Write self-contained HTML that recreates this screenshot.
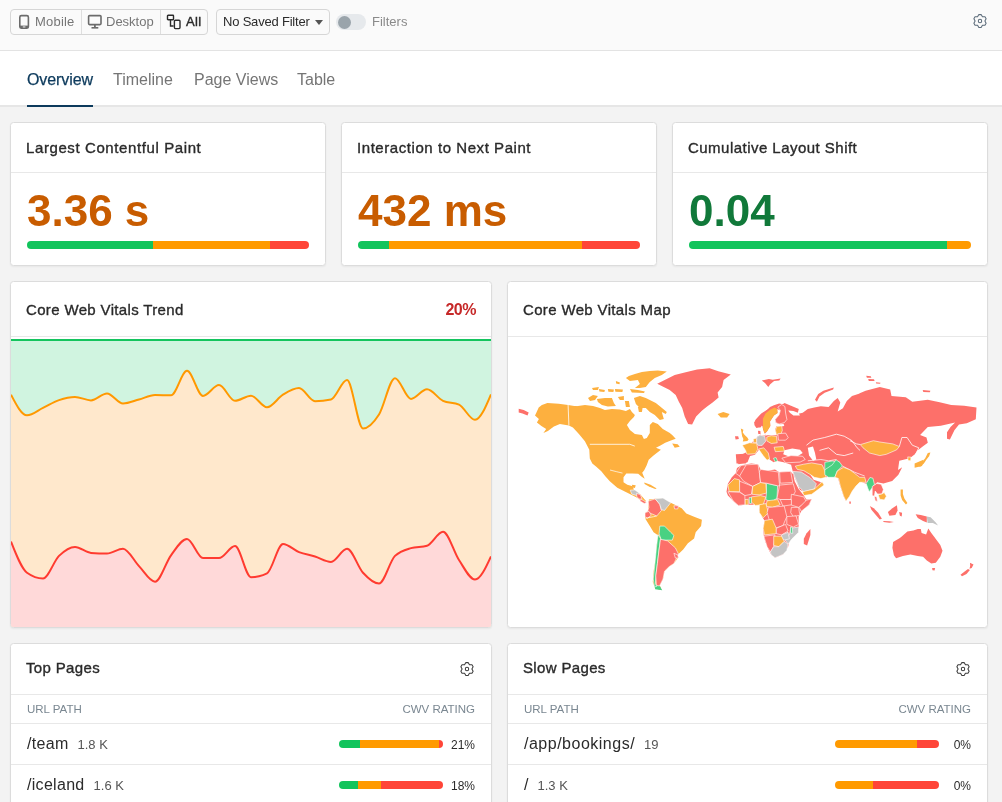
<!DOCTYPE html>
<html><head><meta charset="utf-8">
<style>
*{box-sizing:border-box;margin:0;padding:0}
html,body{width:1002px;height:802px;overflow:hidden}
body{will-change:transform}
body{background:#f3f3f3;font-family:"Liberation Sans",sans-serif;position:relative;color:#2b2b2b}
.abs{position:absolute}
#top{left:0;top:0;width:1002px;height:51px;background:#fafafa;border-bottom:1px solid #e3e3e3}
#tabs{left:0;top:51px;width:1002px;height:56px;background:#fff;border-bottom:2px solid #e6e6e6}
.tab{position:absolute;top:18.5px;font-size:16px;color:#757575;white-space:nowrap;line-height:20px}
.card{position:absolute;background:#fff;border:1px solid #dcdcdc;border-radius:3.5px;box-shadow:0 1px 2px rgba(0,0,0,0.05);overflow:hidden}
.ch{position:absolute;left:0;top:0;right:0;border-bottom:1px solid #e8e8e8}
.ct{position:absolute;left:15px;font-size:15px;color:#2a2a2a;-webkit-text-stroke:0.35px #2a2a2a;letter-spacing:0.35px;white-space:nowrap}
.big{position:absolute;left:16px;top:63px;font-size:44px;font-weight:bold;line-height:50px;white-space:nowrap}
.bar{position:absolute;height:8px;border-radius:4px;overflow:hidden;display:flex}
.g{background:#12c45c}.o{background:#ff9a00}.r{background:#ff4538}
.txt{position:absolute;white-space:nowrap}
.th{position:absolute;top:58.5px;font-size:11.5px;letter-spacing:0px;color:#7a8791;white-space:nowrap}
.url{position:absolute;left:16px;font-size:16px;color:#2b2b2b;white-space:nowrap;line-height:20px}
.cnt{font-size:13px;color:#555;margin-left:9px;letter-spacing:0}
.pct{position:absolute;right:16px;font-size:12px;color:#2b2b2b;white-space:nowrap;line-height:16px}
</style></head><body>

<div id="top" class="abs">
  <!-- button group -->
  <div class="abs" style="left:10px;top:9px;width:198px;height:26px;border:1px solid #d6d6d6;border-radius:4px;background:#fafafa"></div>
  <div class="abs" style="left:81px;top:10px;width:1px;height:24px;background:#dedede"></div>
  <div class="abs" style="left:160px;top:10px;width:1px;height:24px;background:#dedede"></div>
  <svg class="abs" style="left:18px;top:14px" width="12" height="16" viewBox="0 0 12 16"><rect x="1.8" y="1.6" width="8.6" height="12.6" rx="1.6" fill="none" stroke="#6b6b6b" stroke-width="1.6"/><rect x="1.8" y="11.6" width="8.6" height="2.6" fill="#6b6b6b"/><rect x="4.8" y="12.5" width="2.6" height="0.9" fill="#fff"/></svg>
  <div class="txt" style="left:35px;top:14px;font-size:13px;color:#767676;letter-spacing:0.2px">Mobile</div>
  <svg class="abs" style="left:87px;top:14px" width="16" height="16" viewBox="0 0 16 16"><rect x="1.6" y="1.6" width="12.4" height="9" rx="1" fill="none" stroke="#6b6b6b" stroke-width="1.6"/><rect x="7" y="10.5" width="1.8" height="3" fill="#6b6b6b"/><rect x="4.5" y="13" width="6.8" height="1.6" fill="#6b6b6b"/></svg>
  <div class="txt" style="left:106px;top:14px;font-size:13px;color:#767676">Desktop</div>
  <svg class="abs" style="left:166px;top:14px" width="16" height="16" viewBox="0 0 16 16"><rect x="1.5" y="1.2" width="6" height="4.6" rx="0.6" fill="none" stroke="#2b2b2b" stroke-width="1.4"/><rect x="8.4" y="6.2" width="5.6" height="8.4" rx="1" fill="none" stroke="#2b2b2b" stroke-width="1.4"/><path d="M4.5 6 V12 H7.6" fill="none" stroke="#2b2b2b" stroke-width="1.4"/></svg>
  <div class="txt" style="left:186px;top:14px;font-size:13px;color:#2b2b2b;-webkit-text-stroke:0.4px #2b2b2b;letter-spacing:0.3px">All</div>
  <!-- dropdown -->
  <div class="abs" style="left:216px;top:9px;width:114px;height:26px;border:1px solid #d6d6d6;border-radius:4px;background:#fafafa"></div>
  <div class="txt" style="left:223px;top:14px;font-size:13px;color:#2b2b2b;letter-spacing:-0.2px">No Saved Filter</div>
  <svg class="abs" style="left:314px;top:19px" width="10" height="7" viewBox="0 0 10 7"><path d="M1 1 L9 1 L5 6 Z" fill="#555"/></svg>
  <!-- toggle -->
  <div class="abs" style="left:336px;top:14px;width:30px;height:16px;border-radius:8px;background:#e6e9ec"></div>
  <div class="abs" style="left:338px;top:16px;width:13px;height:13px;border-radius:50%;background:#9aa4ab"></div>
  <div class="txt" style="left:372px;top:14px;font-size:13px;color:#8a8a8a">Filters</div>
  <!-- gear -->
  <svg class="abs" style="left:973px;top:14px" width="14" height="14" viewBox="0 0 14 14"><path d="M9.45 2.76 L8.13 0.60 L5.87 0.60 L4.55 2.76 L2.02 2.82 L0.89 4.78 L2.10 7.00 L0.89 9.22 L2.02 11.18 L4.55 11.24 L5.87 13.40 L8.13 13.40 L9.45 11.24 L11.98 11.18 L13.11 9.22 L11.90 7.00 L13.11 4.78 L11.98 2.82 Z" fill="none" stroke="#5b6b7a" stroke-width="1.05" stroke-linejoin="round"/><circle cx="7" cy="7" r="1.7" fill="none" stroke="#5b6b7a" stroke-width="1.05"/></svg>
</div>

<div id="tabs" class="abs">
  <div class="tab" style="left:27px;color:#0c3a5c;-webkit-text-stroke:0.25px #0c3a5c;letter-spacing:-0.1px">Overview</div>
  <div class="tab" style="left:113px">Timeline</div>
  <div class="tab" style="left:194px">Page Views</div>
  <div class="tab" style="left:297px">Table</div>
  <div class="abs" style="left:27px;top:54px;width:66px;height:2px;background:#0c3a5c"></div>
</div>

<!-- metric cards -->
<div class="card" style="left:10px;top:122px;width:316px;height:144px">
  <div class="ch" style="height:50px"></div>
  <div class="ct" style="top:16px;letter-spacing:0.6px">Largest Contentful Paint</div>
  <div class="big" style="color:#c85c00">3.36 s</div>
  <div class="bar" style="left:16px;top:118px;width:282px"><div class="g" style="width:126px"></div><div class="o" style="width:117px"></div><div class="r" style="flex:1"></div></div>
</div>
<div class="card" style="left:341px;top:122px;width:316px;height:144px">
  <div class="ch" style="height:50px"></div>
  <div class="ct" style="top:16px;letter-spacing:0.56px">Interaction to Next Paint</div>
  <div class="big" style="color:#c85c00">432 ms</div>
  <div class="bar" style="left:16px;top:118px;width:282px"><div class="g" style="width:31px"></div><div class="o" style="width:193px"></div><div class="r" style="flex:1"></div></div>
</div>
<div class="card" style="left:672px;top:122px;width:316px;height:144px">
  <div class="ch" style="height:50px"></div>
  <div class="ct" style="top:16px;letter-spacing:0.47px">Cumulative Layout Shift</div>
  <div class="big" style="color:#11793a">0.04</div>
  <div class="bar" style="left:16px;top:118px;width:282px"><div class="g" style="width:258px"></div><div class="o" style="flex:1"></div></div>
</div>

<!-- trend card -->
<div class="card" style="left:10px;top:281px;width:482px;height:347px">
  <div class="ch" style="height:55px"></div>
  <div class="ct" style="top:19px">Core Web Vitals Trend</div>
  <div class="txt" style="right:15px;top:18.5px;font-size:16px;letter-spacing:-0.5px;font-weight:bold;color:#c62828">20%</div>
  <svg id="trend" class="abs" style="left:0;top:55px" width="480" height="290"><rect x="0" y="3" width="480" height="290" fill="#d0f4e0"/><path d="M0.00 57.70 C5.33 68.00 10.67 78.30 16.00 78.30 C21.33 78.30 26.67 73.43 32.00 70.90 C37.33 68.37 42.67 64.93 48.00 63.10 C53.33 61.27 58.67 59.90 64.00 59.90 C69.33 59.90 74.67 63.40 80.00 63.40 C85.33 63.40 90.67 56.50 96.00 56.50 C101.33 56.50 106.67 66.50 112.00 66.50 C117.33 66.50 122.67 63.92 128.00 62.50 C133.33 61.08 138.67 58.00 144.00 58.00 C149.33 58.00 154.67 58.30 160.00 58.30 C165.33 58.30 170.67 33.80 176.00 33.80 C181.33 33.80 186.67 58.90 192.00 58.90 C197.33 58.90 202.67 48.10 208.00 48.10 C213.33 48.10 218.67 63.80 224.00 63.80 C229.33 63.80 234.67 58.70 240.00 58.70 C245.33 58.70 250.67 70.30 256.00 70.30 C261.33 70.30 266.67 60.90 272.00 57.70 C277.33 54.50 282.67 51.10 288.00 51.10 C293.33 51.10 298.67 64.30 304.00 64.30 C309.33 64.30 314.67 63.70 320.00 62.50 C325.33 61.30 330.67 43.10 336.00 43.10 C341.33 43.10 346.67 91.50 352.00 91.50 C357.33 91.50 362.67 85.88 368.00 77.50 C373.33 69.12 378.67 41.20 384.00 41.20 C389.33 41.20 394.67 61.90 400.00 61.90 C405.33 61.90 410.67 52.30 416.00 52.30 C421.33 52.30 426.67 61.27 432.00 63.80 C437.33 66.33 442.67 65.07 448.00 67.60 C453.33 70.13 458.67 82.80 464.00 82.80 C469.33 82.80 474.67 70.10 480.00 57.40 L480 290 L0 290 Z" fill="#ffe8cc"/><path d="M0.00 204.60 C5.33 218.25 10.67 231.90 16.00 235.70 C21.33 239.50 26.67 241.40 32.00 241.40 C37.33 241.40 42.67 224.15 48.00 218.90 C53.33 213.65 58.67 209.90 64.00 209.90 C69.33 209.90 74.67 215.50 80.00 215.90 C85.33 216.30 90.67 216.50 96.00 216.50 C101.33 216.50 106.67 211.70 112.00 211.70 C117.33 211.70 122.67 223.60 128.00 229.10 C133.33 234.60 138.67 244.70 144.00 244.70 C149.33 244.70 154.67 225.43 160.00 218.30 C165.33 211.17 170.67 201.90 176.00 201.90 C181.33 201.90 186.67 221.10 192.00 221.10 C197.33 221.10 202.67 221.10 208.00 221.10 C213.33 221.10 218.67 209.10 224.00 209.10 C229.33 209.10 234.67 240.20 240.00 240.20 C245.33 240.20 250.67 238.90 256.00 236.30 C261.33 233.70 266.67 207.00 272.00 207.00 C277.33 207.00 282.67 213.02 288.00 215.10 C293.33 217.18 298.67 217.87 304.00 219.50 C309.33 221.13 314.67 224.90 320.00 224.90 C325.33 224.90 330.67 211.70 336.00 211.70 C341.33 211.70 346.67 229.90 352.00 235.70 C357.33 241.50 362.67 246.50 368.00 246.50 C373.33 246.50 378.67 224.10 384.00 218.90 C389.33 213.70 394.67 212.70 400.00 211.10 C405.33 209.50 410.67 210.30 416.00 208.70 C421.33 207.10 426.67 194.70 432.00 194.70 C437.33 194.70 442.67 215.02 448.00 223.00 C453.33 230.98 458.67 242.60 464.00 242.60 C469.33 242.60 474.67 231.00 480.00 219.40 L480 290 L0 290 Z" fill="#ffd9d9"/><line x1="0" y1="3" x2="480" y2="3" stroke="#14c45e" stroke-width="2"/><path d="M0.00 57.70 C5.33 68.00 10.67 78.30 16.00 78.30 C21.33 78.30 26.67 73.43 32.00 70.90 C37.33 68.37 42.67 64.93 48.00 63.10 C53.33 61.27 58.67 59.90 64.00 59.90 C69.33 59.90 74.67 63.40 80.00 63.40 C85.33 63.40 90.67 56.50 96.00 56.50 C101.33 56.50 106.67 66.50 112.00 66.50 C117.33 66.50 122.67 63.92 128.00 62.50 C133.33 61.08 138.67 58.00 144.00 58.00 C149.33 58.00 154.67 58.30 160.00 58.30 C165.33 58.30 170.67 33.80 176.00 33.80 C181.33 33.80 186.67 58.90 192.00 58.90 C197.33 58.90 202.67 48.10 208.00 48.10 C213.33 48.10 218.67 63.80 224.00 63.80 C229.33 63.80 234.67 58.70 240.00 58.70 C245.33 58.70 250.67 70.30 256.00 70.30 C261.33 70.30 266.67 60.90 272.00 57.70 C277.33 54.50 282.67 51.10 288.00 51.10 C293.33 51.10 298.67 64.30 304.00 64.30 C309.33 64.30 314.67 63.70 320.00 62.50 C325.33 61.30 330.67 43.10 336.00 43.10 C341.33 43.10 346.67 91.50 352.00 91.50 C357.33 91.50 362.67 85.88 368.00 77.50 C373.33 69.12 378.67 41.20 384.00 41.20 C389.33 41.20 394.67 61.90 400.00 61.90 C405.33 61.90 410.67 52.30 416.00 52.30 C421.33 52.30 426.67 61.27 432.00 63.80 C437.33 66.33 442.67 65.07 448.00 67.60 C453.33 70.13 458.67 82.80 464.00 82.80 C469.33 82.80 474.67 70.10 480.00 57.40" fill="none" stroke="#ff9800" stroke-width="2"/><path d="M0.00 204.60 C5.33 218.25 10.67 231.90 16.00 235.70 C21.33 239.50 26.67 241.40 32.00 241.40 C37.33 241.40 42.67 224.15 48.00 218.90 C53.33 213.65 58.67 209.90 64.00 209.90 C69.33 209.90 74.67 215.50 80.00 215.90 C85.33 216.30 90.67 216.50 96.00 216.50 C101.33 216.50 106.67 211.70 112.00 211.70 C117.33 211.70 122.67 223.60 128.00 229.10 C133.33 234.60 138.67 244.70 144.00 244.70 C149.33 244.70 154.67 225.43 160.00 218.30 C165.33 211.17 170.67 201.90 176.00 201.90 C181.33 201.90 186.67 221.10 192.00 221.10 C197.33 221.10 202.67 221.10 208.00 221.10 C213.33 221.10 218.67 209.10 224.00 209.10 C229.33 209.10 234.67 240.20 240.00 240.20 C245.33 240.20 250.67 238.90 256.00 236.30 C261.33 233.70 266.67 207.00 272.00 207.00 C277.33 207.00 282.67 213.02 288.00 215.10 C293.33 217.18 298.67 217.87 304.00 219.50 C309.33 221.13 314.67 224.90 320.00 224.90 C325.33 224.90 330.67 211.70 336.00 211.70 C341.33 211.70 346.67 229.90 352.00 235.70 C357.33 241.50 362.67 246.50 368.00 246.50 C373.33 246.50 378.67 224.10 384.00 218.90 C389.33 213.70 394.67 212.70 400.00 211.10 C405.33 209.50 410.67 210.30 416.00 208.70 C421.33 207.10 426.67 194.70 432.00 194.70 C437.33 194.70 442.67 215.02 448.00 223.00 C453.33 230.98 458.67 242.60 464.00 242.60 C469.33 242.60 474.67 231.00 480.00 219.40" fill="none" stroke="#ff3b30" stroke-width="2"/></svg>
</div>

<!-- map card -->
<div class="card" style="left:507px;top:281px;width:481px;height:347px">
  <div class="ch" style="height:55px"></div>
  <div class="ct" style="top:19px">Core Web Vitals Map</div>
  <svg id="map" class="abs" style="left:-508px;top:-282px" width="1002" height="802"><polygon points="536.2,412.9 538.7,407.4 541.9,404.9 547.4,402.9 558.7,403.7 568.1,404.9 577.4,406.4 570.0,406.9 578.0,405.9 585.0,404.9 593.0,405.9 599.9,407.9 604.9,409.9 611.9,408.9 619.9,409.4 625.9,410.9 629.9,408.9 631.9,411.9 634.9,414.9 633.9,416.9 629.9,420.9 626.9,424.9 629.9,429.9 634.9,433.9 641.9,434.9 643.9,438.9 646.8,437.9 649.8,432.9 649.8,424.9 652.8,421.9 657.8,423.9 662.8,428.9 669.8,432.9 666.7,430.4 672.2,434.9 675.7,438.8 670.9,440.6 665.2,442.8 660.9,445.3 656.0,447.8 660.9,449.8 653.5,455.6 648.7,459.8 646.7,465.3 644.2,470.3 642.2,472.8 644.7,478.8 641.7,476.8 638.2,473.8 632.3,473.5 626.3,473.5 623.5,477.3 623.5,482.3 627.3,484.8 632.8,486.2 633.8,489.7 639.7,493.7 646.2,501.2 643.2,502.7 637.2,497.7 629.8,494.0 624.8,491.5 617.3,487.7 609.8,481.3 605.3,476.3 601.3,471.3 596.3,466.8 592.3,463.5 589.8,458.6 589.3,449.8 584.9,441.3 578.9,433.9 572.9,427.4 568.9,425.4 559.9,423.9 553.9,426.4 547.9,430.9 543.4,433.1 546.2,428.9 541.4,426.1 536.9,422.4 538.9,418.9 535.0,415.4" fill="#fdb03f"/><polygon points="634.9,374.0 641.9,372.0 649.8,371.0 657.8,370.5 666.8,371.5 661.8,375.0 654.8,378.0 649.8,382.0 645.8,387.0 639.9,388.0 634.9,388.0 639.9,384.0 637.9,380.0 629.9,381.0 625.9,378.0 628.9,376.0" fill="#fdb03f"/><polygon points="633.9,397.9 639.9,395.9 645.8,397.9 649.8,399.9 655.8,402.9 660.8,406.9 666.8,411.9 665.8,413.9 661.8,411.9 663.8,418.9 659.8,419.9 654.8,414.9 649.8,411.9 645.8,407.9 639.9,407.9 635.9,403.9" fill="#fdb03f"/><polygon points="637.9,406.9 642.9,405.9 641.9,411.9 638.9,411.9" fill="#fdb03f"/><polygon points="629.9,389.0 637.9,390.0 644.9,391.4 643.9,392.9 631.9,392.4" fill="#fdb03f"/><polygon points="596.9,398.9 604.9,397.9 611.9,397.9 613.9,402.9 615.9,405.9 607.9,406.4 601.9,404.9 597.9,401.9" fill="#fdb03f"/><polygon points="588.0,397.9 593.0,394.9 597.9,395.9 595.0,399.9 590.0,400.9" fill="#fdb03f"/><polygon points="617.9,396.9 623.9,395.9 623.9,399.9 619.9,399.9" fill="#fdb03f"/><polygon points="624.9,400.9 628.9,400.9 629.9,406.9 625.9,406.9" fill="#fdb03f"/><polygon points="592.0,388.0 598.9,387.0 597.9,390.0 593.0,390.0" fill="#fdb03f"/><polygon points="598.9,389.0 604.9,390.0 604.4,391.9 599.4,391.4" fill="#fdb03f"/><polygon points="607.9,389.0 613.9,389.5 613.4,391.9 608.4,391.7" fill="#fdb03f"/><polygon points="614.9,389.0 622.9,389.5 622.4,391.9 615.4,391.7" fill="#fdb03f"/><polygon points="615.9,381.0 619.9,382.5 619.4,384.2 616.1,383.5" fill="#fdb03f"/><polygon points="672.2,443.6 677.7,444.3 679.7,446.8 674.7,447.8" fill="#fdb03f"/><polygon points="717.6,413.9 723.3,411.9 729.6,413.9 727.1,417.4 720.8,417.4" fill="#fdb03f"/><polygon points="518.7,408.7 523.7,409.9 528.7,412.4 527.5,415.4 522.5,413.6 518.7,412.4" fill="#fd706a"/><polygon points="657.2,383.7 664.7,380.0 674.7,375.0 684.7,372.5 697.1,369.5 709.6,368.2 718.3,371.2 730.8,374.5 723.6,380.0 722.1,386.9 717.6,392.4 718.6,397.4 712.6,402.4 707.1,406.4 702.1,410.4 696.1,416.4 692.1,424.4 688.1,423.9 684.7,416.4 682.2,407.9 678.7,401.4 675.7,394.9 669.7,389.9 662.2,386.2" fill="#fd706a"/><polyline points="568.1,404.9 568.9,425.4" fill="none" stroke="#fff" stroke-width="0.80" stroke-linejoin="round"/><polyline points="589.8,444.3 629.8,444.3 634.8,446.1" fill="none" stroke="#fff" stroke-width="0.80" stroke-linejoin="round"/><polyline points="610.0,470.0 616.2,471.6 622.5,473.1" fill="none" stroke="#fff" stroke-width="0.70" stroke-linejoin="round"/><polygon points="630.2,490.2 634.9,489.9 639.6,493.4 637.3,495.7 631.8,494.1" fill="#c4c4c4" stroke="#fff" stroke-width="0.6" stroke-linejoin="round"/><polygon points="636.5,493.4 640.4,494.6 641.9,498.8 639.6,499.6 636.8,496.5" fill="#fd706a" stroke="#fff" stroke-width="0.6" stroke-linejoin="round"/><polygon points="639.6,498.8 643.5,500.4 646.6,502.7 644.3,503.5 640.4,501.2" fill="#fd706a" stroke="#fff" stroke-width="0.6" stroke-linejoin="round"/><polygon points="644.3,482.5 650.5,484.8 656.7,488.4 655.2,489.0 648.9,486.4 644.6,484.0" fill="#fdb03f"/><polygon points="631.8,484.8 635.7,485.3 634.9,487.9 632.6,487.4" fill="#fdb03f"/><polygon points="648.9,499.6 655.2,498.8 661.4,498.8 670.7,502.7 675.4,505.0 681.7,508.2 686.3,513.6 694.1,516.7 701.9,519.8 701.1,526.1 695.7,532.3 694.1,538.5 687.9,543.2 683.2,549.4 678.5,554.1 675.4,552.6 678.5,557.2 673.9,563.5 669.2,566.6 664.5,571.2 663.0,579.0 659.8,585.3 661.4,589.9 655.2,588.4 652.8,582.1 653.6,571.2 656.0,557.2 656.7,544.8 658.3,535.4 653.6,532.3 648.9,524.5 645.0,518.3 645.0,513.6 648.2,510.5" fill="#fdb03f"/><polygon points="648.2,501.2 655.2,498.8 659.8,504.3 661.4,510.5 656.7,516.0 651.3,513.6 647.4,512.1 648.9,507.4" fill="#fd706a" stroke="#fff" stroke-width="0.6" stroke-linejoin="round"/><polygon points="645.0,512.8 648.9,511.3 651.3,515.2 647.4,518.3 645.0,516.7" fill="#fd706a" stroke="#fff" stroke-width="0.6" stroke-linejoin="round"/><polygon points="655.2,498.8 663.0,498.0 670.7,502.7 667.6,506.6 664.5,510.5 661.4,509.7 659.8,504.3" fill="#c4c4c4" stroke="#fff" stroke-width="0.6" stroke-linejoin="round"/><polygon points="673.9,505.8 678.5,505.8 677.8,508.9 674.6,508.9" fill="#fd706a" stroke="#fff" stroke-width="0.6" stroke-linejoin="round"/><polygon points="659.8,526.1 664.5,526.1 670.7,532.3 673.9,535.4 672.3,540.1 661.4,540.1 659.1,533.9" fill="#4ad182" stroke="#fff" stroke-width="0.6" stroke-linejoin="round"/><polygon points="654.4,584.5 659.8,586.0 662.2,590.2 655.2,589.2" fill="#4ad182"/><polygon points="658.0,534.6 660.5,538.5 658.9,551.0 657.4,563.5 655.8,575.9 655.5,583.7 656.7,586.5 654.4,586.8 653.3,579.0 654.9,563.5 656.4,547.9" fill="#4ad182" stroke="#fff" stroke-width="0.6" stroke-linejoin="round"/><polygon points="660.5,539.3 667.6,540.9 675.4,547.9 678.5,554.1 673.9,563.5 669.2,566.6 664.5,571.2 663.0,579.0 659.5,586.0 656.4,585.3 655.8,575.9 657.4,563.5 658.9,551.0" fill="#fd706a" stroke="#fff" stroke-width="0.6" stroke-linejoin="round"/><polygon points="673.9,553.3 677.8,554.9 678.5,558.0 675.4,558.0" fill="#fd706a" stroke="#fff" stroke-width="0.6" stroke-linejoin="round"/><polyline points="645.0,518.3 653.6,516.7 656.7,516.0" fill="none" stroke="#fff" stroke-width="0.70" stroke-linejoin="round"/><polygon points="737.5,462.3 737.0,456.1 742.5,454.3 748.7,451.1 745.0,446.1 751.2,443.6 755.0,439.3 759.9,434.9 763.7,432.4 762.4,426.1 756.2,423.6 755.0,419.9 761.2,413.6 768.7,408.7 777.4,404.9 783.6,403.7 784.5,403.1 791.0,405.7 798.8,408.9 797.5,414.1 802.7,412.8 807.8,408.9 814.3,407.6 820.8,406.3 828.6,407.0 833.8,401.1 837.7,397.9 840.3,402.4 837.7,411.5 842.9,408.3 846.8,401.1 852.0,395.9 859.7,393.4 859.1,393.4 865.6,390.8 879.8,386.9 890.2,389.5 891.5,395.9 905.8,397.2 912.3,401.8 927.8,399.8 940.8,402.4 951.2,405.0 964.2,405.7 976.5,407.6 975.8,419.3 966.8,423.2 959.0,424.5 954.4,430.3 949.9,439.4 947.0,438.8 947.0,432.3 950.5,427.1 955.1,422.5 940.8,425.8 927.8,427.1 920.1,434.9 926.5,437.5 927.8,442.7 922.7,446.5 917.5,450.4 914.9,454.3 909.7,458.2 904.5,459.5 899.3,460.8 898.0,470.0 902.2,467.3 898.4,474.8 892.2,481.0 883.4,483.5 877.2,482.3 873.5,486.0 868.5,484.8 862.2,482.3 859.7,479.8 856.0,484.8 848.5,496.0 846.0,501.0 843.5,496.0 839.8,484.8 837.8,477.3 832.3,476.0 826.1,477.3 819.8,472.3 814.8,468.5 809.8,464.8 804.9,466.0 813.6,479.8 821.1,482.3 817.3,487.2 804.9,492.2 799.9,489.7 793.6,474.8 791.1,464.8 787.4,463.5 783.6,462.3 777.4,461.0 773.7,462.3 769.9,459.8 764.9,453.6 759.9,448.6 755.0,454.8 750.0,456.1 747.5,462.3 738.7,464.3" fill="#fd706a"/><polygon points="761.8,380.4 768.9,379.1 772.8,379.7 780.6,378.4 779.3,380.4 774.1,381.0 770.2,384.3 768.3,386.9 765.0,383.0" fill="#fd706a"/><polygon points="815.0,399.8 818.2,394.0 823.4,390.8 833.8,387.5 833.1,389.5 824.7,392.7 819.5,396.6 816.9,401.8" fill="#fd706a"/><polygon points="866.2,375.8 870.8,376.2 871.4,377.8 866.9,377.8" fill="#fd706a"/><polygon points="868.2,379.1 874.0,379.3 874.6,381.0 868.8,381.0" fill="#fd706a"/><polygon points="875.9,382.3 880.5,382.7 880.1,383.8 876.2,383.6" fill="#fd706a"/><polygon points="922.7,390.1 930.4,390.8 929.8,392.3 923.3,392.1" fill="#fd706a"/><polygon points="784.5,450.2 792.3,448.5 800.1,449.8 802.7,453.0 797.5,456.3 788.4,456.3 783.2,454.3" fill="#ffffff"/><polygon points="807.8,447.8 813.0,446.5 815.0,453.0 816.3,459.5 813.0,460.8 809.1,455.6" fill="#ffffff"/><polygon points="744.7,419.5 754.5,422.0 756.4,427.9 760.9,427.9 762.9,430.5 757.7,430.5 757.0,435.0 754.5,436.3 751.2,438.9 748.6,438.9 744.7,435.0" fill="#ffffff"/><polygon points="777.2,409.1 780.4,410.4 779.1,414.9 775.2,419.5 775.9,422.7 779.7,424.3 783.6,424.0 784.3,425.9 780.4,426.6 776.5,425.9 775.2,429.2 776.5,435.0 771.3,435.3 766.1,435.3 764.8,433.7 766.8,431.8 770.3,425.9 770.0,421.4 773.9,415.6 777.5,413.0" fill="#ffffff"/><polygon points="788.2,410.4 793.4,411.0 798.6,413.0 800.0,415.6 793.4,415.6 790.1,413.0" fill="#ffffff"/><polygon points="760.6,428.5 763.5,430.5 764.8,433.7 766.8,435.5 760.9,435.5 760.0,432.4" fill="#ffffff"/><polygon points="741.5,400.0 770.0,400.0 771.3,403.9 766.1,407.8 758.3,416.2 753.8,421.4 741.5,421.4" fill="#ffffff"/><polygon points="754.1,422.0 758.3,418.8 762.9,414.9 766.1,411.0 770.0,407.1 773.9,405.2 779.1,403.6 781.7,403.9 780.4,406.5 777.2,407.1 771.3,409.1 767.4,413.0 763.5,418.8 762.2,424.6 760.9,427.2 756.4,427.9 754.5,425.3" fill="#fd706a"/><polygon points="762.9,418.8 765.5,413.6 770.0,409.7 774.6,407.5 777.2,409.1 777.5,413.0 773.9,415.6 770.0,421.4 770.3,425.9 766.8,431.8 764.2,433.1 762.9,427.9" fill="#fdb03f"/><polygon points="777.8,407.1 781.7,404.5 784.9,406.5 785.6,413.0 786.9,419.5 784.3,422.7 779.1,424.0 775.9,422.7 775.2,419.5 779.1,414.9 780.4,410.4" fill="#fd706a" stroke="#fff" stroke-width="0.6" stroke-linejoin="round"/><polygon points="776.5,426.6 781.7,425.9 782.3,430.5 780.4,435.0 776.5,435.0 775.5,430.5" fill="#fdb03f" stroke="#fff" stroke-width="0.6" stroke-linejoin="round"/><polygon points="758.0,430.8 760.4,431.0 760.6,434.0 758.3,434.0" fill="#fd706a"/><polygon points="740.8,428.5 743.4,429.8 742.8,432.4 744.7,435.0 747.3,437.6 748.6,439.6 747.3,440.9 742.8,441.5 743.4,438.9 742.1,436.3 741.5,432.4" fill="#fdb03f"/><polygon points="735.0,436.3 738.2,436.3 738.9,438.9 735.6,439.6" fill="#fd706a"/><polygon points="757.0,436.3 760.9,435.3 764.8,436.3 765.5,441.5 762.2,445.4 758.3,445.4 756.4,442.8" fill="#c4c4c4" stroke="#fff" stroke-width="0.6" stroke-linejoin="round"/><polygon points="766.8,437.0 771.3,435.7 776.5,436.3 777.2,442.8 771.3,443.5 766.8,440.9" fill="#fdb03f" stroke="#fff" stroke-width="0.6" stroke-linejoin="round"/><polygon points="777.8,433.7 785.6,433.1 788.2,437.6 785.6,440.2 778.5,440.2" fill="#fd706a" stroke="#fff" stroke-width="0.6" stroke-linejoin="round"/><polygon points="753.2,438.9 756.4,438.3 756.7,442.5 753.8,443.1" fill="#fdb03f" stroke="#fff" stroke-width="0.6" stroke-linejoin="round"/><polygon points="742.3,445.2 749.5,442.7 756.6,443.3 757.9,449.1 755.3,453.7 746.9,454.3 745.6,450.4" fill="#fdb03f" stroke="#fff" stroke-width="0.6" stroke-linejoin="round"/><polygon points="758.5,449.1 763.7,447.8 768.3,453.0 769.6,458.9 767.0,460.2 763.1,455.6" fill="#fdb03f" stroke="#fff" stroke-width="0.6" stroke-linejoin="round"/><polygon points="774.1,447.2 783.2,446.5 784.5,451.1 775.4,451.7" fill="#fdb03f" stroke="#fff" stroke-width="0.6" stroke-linejoin="round"/><polygon points="773.5,458.2 776.1,457.6 777.4,460.8 775.4,462.1" fill="#4ad182" stroke="#fff" stroke-width="0.6" stroke-linejoin="round"/><polygon points="735.8,454.3 745.6,453.7 749.5,455.6 747.5,460.8 745.6,463.4 736.5,463.4" fill="#fd706a"/><polygon points="781.9,458.2 791.0,455.6 802.7,456.3 805.2,459.5 800.1,462.1 785.8,462.8" fill="#fd706a" stroke="#fff" stroke-width="0.6" stroke-linejoin="round"/><polyline points="806.5,445.2 813.0,440.1 824.7,437.5 836.4,434.2 844.2,436.2 852.0,440.7 857.1,447.8 860.0,450.4" fill="none" stroke="#fff" stroke-width="0.80" stroke-linejoin="round"/><polyline points="819.5,450.4 828.6,447.8 836.4,454.3 844.2,455.6 853.2,453.0" fill="none" stroke="#fff" stroke-width="0.80" stroke-linejoin="round"/><polyline points="807.8,460.8 820.8,459.5 828.6,460.8 836.4,459.5" fill="none" stroke="#fff" stroke-width="0.70" stroke-linejoin="round"/><polyline points="850.0,440.7 856.5,443.9 860.4,444.6" fill="none" stroke="#fff" stroke-width="0.80" stroke-linejoin="round"/><polyline points="899.3,446.5 901.9,437.5 907.1,437.5 912.3,445.2 918.8,447.8 916.2,453.0 914.9,455.6" fill="none" stroke="#fff" stroke-width="0.80" stroke-linejoin="round"/><polyline points="842.3,466.0 854.8,472.3 864.7,476.0" fill="none" stroke="#fff" stroke-width="0.70" stroke-linejoin="round"/><polygon points="795.3,466.1 803.8,464.2 811.7,462.9 822.1,464.8 824.8,470.7 826.1,477.3 820.8,478.6 814.3,477.3 810.4,474.6 803.8,470.7 797.3,469.4" fill="#fdb03f" stroke="#fff" stroke-width="0.6" stroke-linejoin="round"/><polygon points="792.7,471.4 801.2,472.0 810.4,477.9 816.3,483.8 814.3,489.0 803.8,491.7 798.6,486.4" fill="#c4c4c4" stroke="#fff" stroke-width="0.6" stroke-linejoin="round"/><polygon points="802.5,491.7 814.3,489.0 822.1,481.8 824.1,485.1 811.7,494.3 803.8,495.6" fill="#fdb03f" stroke="#fff" stroke-width="0.6" stroke-linejoin="round"/><polygon points="824.8,462.3 832.3,461.0 839.8,462.3 836.0,466.0 831.0,469.8 824.8,469.8" fill="#4ad182" stroke="#fff" stroke-width="0.6" stroke-linejoin="round"/><polygon points="824.8,469.8 832.3,464.8 836.0,459.8 839.8,462.3 842.3,466.0 837.3,471.0 834.8,477.3 828.6,477.3 824.8,474.8" fill="#4ad182" stroke="#fff" stroke-width="0.6" stroke-linejoin="round"/><polygon points="837.3,471.0 843.5,467.3 849.8,469.8 854.8,473.5 859.7,477.3 864.7,477.3 866.0,482.3 859.7,482.3 856.0,486.0 852.3,491.0 849.3,496.7 846.0,501.0 843.5,496.0 840.3,486.0 838.5,478.5 834.8,477.3" fill="#fdb03f" stroke="#fff" stroke-width="0.6" stroke-linejoin="round"/><polygon points="860.4,444.6 873.4,440.7 879.8,442.0 892.8,443.9 899.3,446.5 896.7,449.8 886.3,454.3 879.8,455.6 869.5,453.0 863.0,447.8" fill="#fdb03f" stroke="#fff" stroke-width="0.6" stroke-linejoin="round"/><polygon points="927.8,453.0 930.4,452.4 929.1,456.3 926.5,459.5 923.9,463.4 920.1,466.7 917.5,465.4 922.0,462.1 925.2,458.2" fill="#fdb03f"/><polygon points="907.7,456.9 911.0,457.2 910.7,460.8 908.1,460.6" fill="#fdb03f" stroke="#fff" stroke-width="0.6" stroke-linejoin="round"/><polygon points="914.6,463.5 923.4,459.8 922.1,466.0 914.6,467.8" fill="#fdb03f"/><polygon points="737.0,468.1 741.0,465.5 746.2,464.2 751.4,463.5 758.0,464.2 760.6,469.4 767.1,470.7 775.0,469.4 778.9,472.0 790.7,471.4 793.3,474.6 794.6,481.2 798.6,489.0 803.8,495.6 806.4,499.5 811.7,498.9 809.1,504.8 801.2,511.3 798.6,516.6 798.6,528.3 794.6,532.3 790.7,536.2 788.1,546.7 782.9,554.5 775.0,557.8 771.1,554.5 768.5,549.3 765.2,541.4 763.9,536.2 763.2,529.6 764.5,520.5 761.9,516.6 759.3,510.0 760.6,504.8 758.0,503.5 752.7,504.8 746.2,504.8 738.3,505.4 733.1,500.8 727.9,495.6 726.5,491.7 727.9,483.8 731.8,477.3 735.7,473.3" fill="#fd706a"/><polygon points="735.7,473.3 741.0,465.5 746.2,464.8 747.5,469.4 739.6,476.0" fill="#fd706a" stroke="#fff" stroke-width="0.6" stroke-linejoin="round"/><polygon points="739.6,476.0 746.2,464.8 758.0,464.2 759.3,472.0 760.6,482.5 752.7,486.4 743.6,481.2" fill="#fd706a" stroke="#fff" stroke-width="0.6" stroke-linejoin="round"/><polygon points="727.9,485.1 734.4,478.6 739.6,479.9 740.3,491.7 729.2,491.7" fill="#fdb03f" stroke="#fff" stroke-width="0.6" stroke-linejoin="round"/><polygon points="739.6,481.2 752.7,486.4 751.4,494.3 744.9,495.6 739.6,491.7" fill="#fd706a" stroke="#fff" stroke-width="0.6" stroke-linejoin="round"/><polygon points="752.7,486.4 760.6,482.5 765.8,483.2 766.5,493.0 759.3,494.9 752.1,494.3" fill="#fdb03f" stroke="#fff" stroke-width="0.6" stroke-linejoin="round"/><polygon points="766.5,483.2 777.6,485.8 777.0,498.2 771.1,502.1 765.8,499.5 766.5,493.0" fill="#4ad182" stroke="#fff" stroke-width="0.6" stroke-linejoin="round"/><polygon points="759.3,472.0 760.6,469.4 778.3,472.0 779.6,485.8 777.6,485.8 766.5,483.2 760.6,482.5" fill="#fd706a" stroke="#fff" stroke-width="0.6" stroke-linejoin="round"/><polygon points="779.6,472.0 790.7,471.4 792.7,482.5 780.2,483.2" fill="#fd706a" stroke="#fff" stroke-width="0.6" stroke-linejoin="round"/><polygon points="779.6,485.1 793.3,483.8 795.3,491.7 790.7,499.5 780.2,499.5 777.0,498.2" fill="#fd706a" stroke="#fff" stroke-width="0.6" stroke-linejoin="round"/><polygon points="751.4,496.9 760.6,495.6 765.8,496.9 763.2,504.8 755.4,505.4 751.4,502.1" fill="#fdb03f" stroke="#fff" stroke-width="0.6" stroke-linejoin="round"/><polygon points="744.9,499.5 748.2,499.3 748.2,504.8 745.1,505.0" fill="#fdb03f" stroke="#fff" stroke-width="0.6" stroke-linejoin="round"/><polygon points="749.1,497.6 751.4,497.6 751.4,503.5 749.5,503.5" fill="#4ad182" stroke="#fff" stroke-width="0.6" stroke-linejoin="round"/><polygon points="727.9,491.7 739.6,492.3 744.9,495.6 744.9,504.8 738.3,505.4 733.1,500.8" fill="#fd706a" stroke="#fff" stroke-width="0.6" stroke-linejoin="round"/><polygon points="767.1,500.8 777.6,499.5 780.2,504.8 772.4,507.4 765.8,506.1" fill="#fdb03f" stroke="#fff" stroke-width="0.6" stroke-linejoin="round"/><polygon points="759.3,504.8 765.8,503.5 768.5,512.6 763.2,517.9 759.3,512.6" fill="#fdb03f" stroke="#fff" stroke-width="0.6" stroke-linejoin="round"/><polygon points="791.4,494.3 803.8,496.9 806.4,502.1 798.6,507.4 790.7,504.8" fill="#fd706a" stroke="#fff" stroke-width="0.6" stroke-linejoin="round"/><polygon points="806.4,500.2 811.7,498.9 809.1,504.8 801.2,511.3 799.2,507.4" fill="#fd706a" stroke="#fff" stroke-width="0.6" stroke-linejoin="round"/><polygon points="780.2,499.5 791.4,499.5 791.4,504.8 782.9,506.1" fill="#fd706a" stroke="#fff" stroke-width="0.6" stroke-linejoin="round"/><polygon points="768.5,507.4 784.2,506.1 786.8,516.6 782.9,525.7 775.0,528.3 769.8,521.8 767.1,512.6" fill="#fd706a" stroke="#fff" stroke-width="0.6" stroke-linejoin="round"/><polygon points="791.4,507.4 798.6,507.4 799.9,515.2 793.3,516.6 790.7,512.6" fill="#fd706a" stroke="#fff" stroke-width="0.6" stroke-linejoin="round"/><polygon points="786.8,516.6 796.0,515.9 798.6,524.4 793.3,527.0 786.8,524.4" fill="#fd706a" stroke="#fff" stroke-width="0.6" stroke-linejoin="round"/><polygon points="764.5,520.5 772.4,519.2 776.3,528.3 776.3,533.6 764.5,534.9 763.2,528.3" fill="#fdb03f" stroke="#fff" stroke-width="0.6" stroke-linejoin="round"/><polygon points="776.3,528.3 785.5,524.4 788.1,531.0 781.6,534.9 776.3,533.6" fill="#fd706a" stroke="#fff" stroke-width="0.6" stroke-linejoin="round"/><polygon points="790.7,528.3 798.6,527.0 798.6,532.3 792.0,538.8 788.1,544.1 784.2,538.8 789.4,534.9" fill="#c4c4c4" stroke="#fff" stroke-width="0.6" stroke-linejoin="round"/><polygon points="781.6,534.9 788.1,532.3 789.4,538.8 784.2,540.1 781.6,537.5" fill="#c4c4c4" stroke="#fff" stroke-width="0.6" stroke-linejoin="round"/><polygon points="790.5,527.0 792.3,527.3 792.7,533.3 790.7,533.1" fill="#4ad182" stroke="#fff" stroke-width="0.6" stroke-linejoin="round"/><polygon points="763.9,536.2 775.0,534.9 773.7,546.7 770.4,551.9 767.1,546.7" fill="#fd706a" stroke="#fff" stroke-width="0.6" stroke-linejoin="round"/><polygon points="773.7,536.2 781.6,536.2 784.2,541.4 778.9,546.7 773.7,545.4" fill="#fdb03f" stroke="#fff" stroke-width="0.6" stroke-linejoin="round"/><polygon points="770.4,551.9 773.7,546.7 778.9,546.7 784.2,541.4 788.1,544.1 786.8,550.6 782.9,554.5 775.0,557.8 771.1,554.5" fill="#c4c4c4" stroke="#fff" stroke-width="0.6" stroke-linejoin="round"/><polygon points="806.4,533.6 810.4,529.0 810.4,534.9 807.1,545.4 803.8,544.1 803.8,538.8" fill="#fd706a"/><polygon points="893.1,541.9 899.9,538.1 907.4,531.4 913.4,530.6 917.8,529.1 920.8,529.1 921.6,532.9 926.1,534.4 928.3,528.4 931.3,532.9 935.8,538.9 940.3,544.9 942.5,550.8 940.3,556.8 935.8,562.8 931.3,563.6 926.8,560.6 923.1,556.8 917.8,556.1 910.4,554.6 902.9,556.1 896.1,558.3 893.9,555.3 892.4,547.8" fill="#fd706a"/><polygon points="932.1,568.1 935.1,568.1 934.6,570.6 932.5,570.3" fill="#fd706a"/><polygon points="969.9,562.8 973.5,564.6 971.7,568.1 969.5,568.8 970.2,565.8" fill="#fd706a"/><polygon points="968.0,569.1 969.9,570.0 966.5,574.0 962.0,576.3 960.5,574.8 964.3,571.8" fill="#fd706a"/><polygon points="915.6,514.2 920.8,514.9 926.8,516.4 926.8,522.4 923.1,520.9 917.8,517.9" fill="#fd706a"/><polygon points="926.8,516.4 930.6,517.2 935.8,522.4 938.1,525.4 932.8,523.1 927.6,523.1" fill="#c4c4c4"/><polygon points="887.9,511.9 892.4,508.2 896.9,505.2 897.6,510.4 895.4,514.9 889.4,515.7" fill="#fd706a"/><polygon points="869.9,505.9 873.7,508.2 878.2,512.7 881.9,518.7 879.7,519.4 875.2,514.2 871.4,509.7" fill="#fd706a"/><polygon points="883.4,520.9 889.4,521.2 893.9,522.1 889.4,522.7 883.4,522.1" fill="#fd706a"/><polygon points="899.1,511.9 902.1,512.7 901.7,516.4 899.9,515.7" fill="#fd706a"/><polygon points="900.6,489.5 902.9,489.5 902.9,494.0 904.4,498.4 907.4,502.9 905.9,504.4 902.1,499.9 900.6,495.4" fill="#fdb03f"/><polygon points="866.2,483.5 869.9,477.5 872.9,478.2 874.4,484.2 872.2,488.0 869.2,491.7 867.7,488.0" fill="#4ad182" stroke="#fff" stroke-width="0.6" stroke-linejoin="round"/><polygon points="872.2,486.5 876.7,483.5 881.2,484.2 883.4,489.5 881.9,494.0 877.4,494.0 875.2,491.0 874.4,496.2 872.2,495.4" fill="#fd706a" stroke="#fff" stroke-width="0.6" stroke-linejoin="round"/><polygon points="878.2,494.7 881.9,494.0 884.2,492.5 886.4,496.2 884.2,499.9 879.7,499.2" fill="#fdb03f" stroke="#fff" stroke-width="0.6" stroke-linejoin="round"/><polygon points="874.4,496.2 876.7,496.9 877.4,501.4 875.2,500.7" fill="#fd706a" stroke="#fff" stroke-width="0.6" stroke-linejoin="round"/><polygon points="849.3,501.4 850.8,501.4 850.8,503.7 849.4,503.7" fill="#fd706a"/></svg>
</div>

<!-- top pages -->
<div class="card" style="left:10px;top:643px;width:482px;height:200px">
  <div class="ch" style="height:51px"></div>
  <div class="ct" style="top:15px">Top Pages</div>
  <svg class="abs" style="left:449px;top:18px" width="14" height="14" viewBox="0 0 14 14"><path d="M9.45 2.76 L8.13 0.60 L5.87 0.60 L4.55 2.76 L2.02 2.82 L0.89 4.78 L2.10 7.00 L0.89 9.22 L2.02 11.18 L4.55 11.24 L5.87 13.40 L8.13 13.40 L9.45 11.24 L11.98 11.18 L13.11 9.22 L11.90 7.00 L13.11 4.78 L11.98 2.82 Z" fill="none" stroke="#3d3d3d" stroke-width="1.05" stroke-linejoin="round"/><circle cx="7" cy="7" r="1.7" fill="none" stroke="#3d3d3d" stroke-width="1.05"/></svg>
  <div class="abs" style="left:0;top:79px;width:100%;height:1px;background:#e8e8e8"></div>
  <div class="abs" style="left:0;top:120px;width:100%;height:1px;background:#e8e8e8"></div>
  <div class="th" style="left:16px">URL PATH</div>
  <div class="th" style="right:16px">CWV RATING</div>

  <div class="url" style="top:90px;letter-spacing:0.3px">/team<span class="cnt">1.8 K</span></div>
  <div class="bar" style="left:328px;top:96px;width:104px"><div class="g" style="width:21px"></div><div class="o" style="width:79px"></div><div class="r" style="flex:1"></div></div>
  <div class="pct" style="top:93px">21%</div>
  <div class="url" style="top:131px;letter-spacing:0.3px">/iceland<span class="cnt">1.6 K</span></div>
  <div class="bar" style="left:328px;top:137px;width:104px"><div class="g" style="width:19px"></div><div class="o" style="width:23px"></div><div class="r" style="flex:1"></div></div>
  <div class="pct" style="top:134px">18%</div>
</div>
<div class="card" style="left:507px;top:643px;width:481px;height:200px">
  <div class="ch" style="height:51px"></div>
  <div class="ct" style="top:15px">Slow Pages</div>
  <svg class="abs" style="left:448px;top:18px" width="14" height="14" viewBox="0 0 14 14"><path d="M9.45 2.76 L8.13 0.60 L5.87 0.60 L4.55 2.76 L2.02 2.82 L0.89 4.78 L2.10 7.00 L0.89 9.22 L2.02 11.18 L4.55 11.24 L5.87 13.40 L8.13 13.40 L9.45 11.24 L11.98 11.18 L13.11 9.22 L11.90 7.00 L13.11 4.78 L11.98 2.82 Z" fill="none" stroke="#3d3d3d" stroke-width="1.05" stroke-linejoin="round"/><circle cx="7" cy="7" r="1.7" fill="none" stroke="#3d3d3d" stroke-width="1.05"/></svg>
  <div class="abs" style="left:0;top:79px;width:100%;height:1px;background:#e8e8e8"></div>
  <div class="abs" style="left:0;top:120px;width:100%;height:1px;background:#e8e8e8"></div>
  <div class="th" style="left:16px">URL PATH</div>
  <div class="th" style="right:16px">CWV RATING</div>

  <div class="url" style="top:90px;letter-spacing:0.5px">/app/bookings/<span class="cnt">19</span></div>
  <div class="bar" style="left:327px;top:96px;width:104px"><div class="o" style="width:82px"></div><div class="r" style="flex:1"></div></div>
  <div class="pct" style="top:93px">0%</div>
  <div class="url" style="top:131px">/<span class="cnt">1.3 K</span></div>
  <div class="bar" style="left:327px;top:137px;width:104px"><div class="o" style="width:38px"></div><div class="r" style="flex:1"></div></div>
  <div class="pct" style="top:134px">0%</div>
</div>

</body></html>
